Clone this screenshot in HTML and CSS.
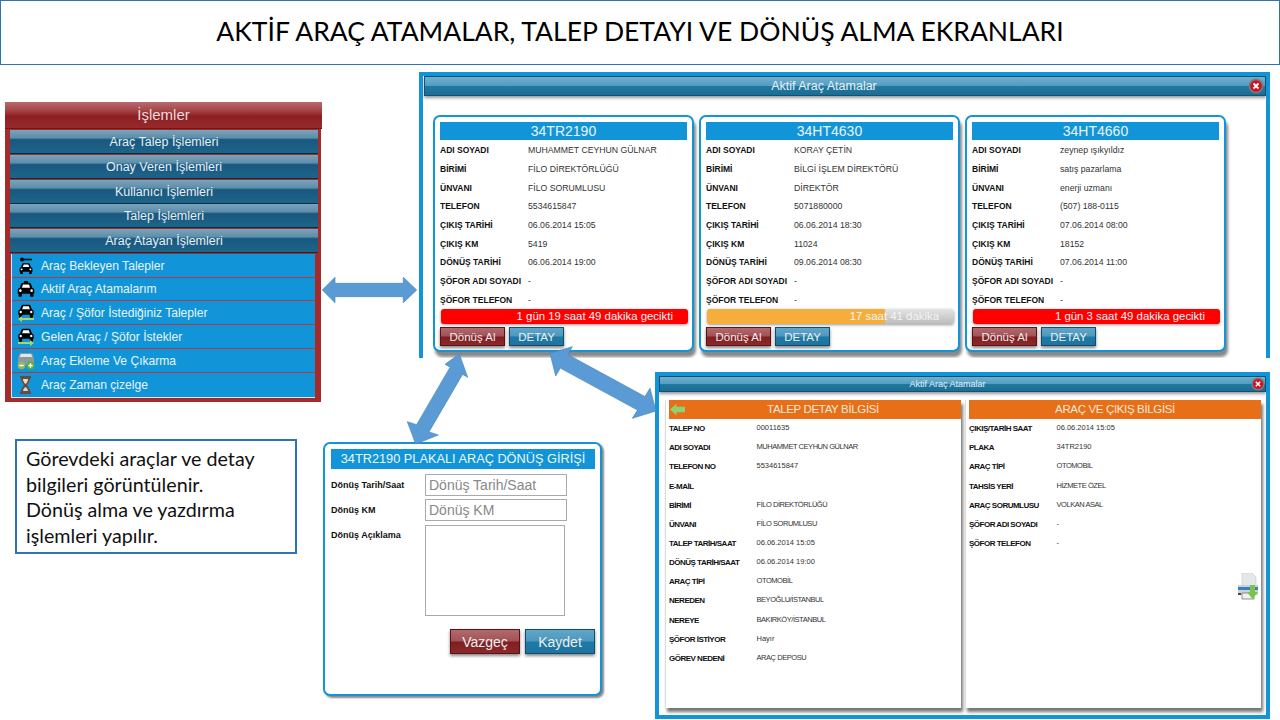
FILE: index.html
```html
<!DOCTYPE html>
<html lang="en">
<head>
    <meta charset="UTF-8">
    <title>Aktif Araç Atamalar</title>
    <link rel="stylesheet" href="styles.css">
</head>
<body>
    <svg class="icon-defs" width="0" height="0">
        <symbol id="car" viewBox="0 0 24 20">
            <path d="M7.5 1h9c1 0 1.700.5 2 1.400l2 5.600c1.500.4 2.500 1.400 2.500 3V15.500h-1v3a1 1 0 0 1-1 1h-2.500a1 1 0 0 1-1-1v-3H6.500v3a1 1 0 0 1-1 1H3a1 1 0 0 1-1-1v-3H1V11c0-1.600 1-2.600 2.500-3l2-5.600C5.800 1.500 6.500 1 7.500 1z" fill="#000"/>
            <path d="M8 3.200h8l1.500 4.300H6.500z" fill="#fff"/>
            <circle cx="4.500" cy="11.500" r="1.700" fill="#fff"/>
            <circle cx="19.500" cy="11.500" r="1.700" fill="#fff"/>
        </symbol>
        <symbol id="close" viewBox="0 0 16 16">
            <circle cx="8" cy="8" r="7.500" fill="#7a7a7a"/>
            <circle cx="8" cy="8" r="5.800" fill="#d3101f"/>
            <path d="M5.500 5.500l5 5M10.500 5.500l-5 5" stroke="#fff" stroke-width="1.800"/>
        </symbol>
    </svg>

    <header class="slide-title">AKTİF ARAÇ ATAMALAR, TALEP DETAYI VE DÖNÜŞ ALMA EKRANLARI</header>

    <!-- Sol menu -->
    <nav class="menu-panel">
        <div class="menu-head">İşlemler</div>
        <div class="menu-item">Araç Talep İşlemleri</div>
        <div class="menu-item">Onay Veren İşlemleri</div>
        <div class="menu-item">Kullanıcı İşlemleri</div>
        <div class="menu-item">Talep İşlemleri</div>
        <div class="menu-item">Araç Atayan İşlemleri</div>
        <ul class="sub-menu">
            <li>
                <svg class="sub-icon" viewBox="0 0 18 18">
                    <use href="#car" x="2" y="5" width="14" height="13"/>
                    <circle cx="5" cy="2.500" r="2" fill="#000"/>
                    <path d="M5 1.700h10v1.600H5z" fill="#000"/>
                </svg>
                Araç Bekleyen Talepler
            </li>
            <li>
                <svg class="sub-icon" viewBox="0 0 18 18">
                    <use href="#car" x="0" y="2" width="18" height="15"/>
                    <rect x="7" y="1" width="4" height="2" fill="#000"/>
                </svg>
                Aktif Araç Atamalarım
            </li>
            <li>
                <svg class="sub-icon" viewBox="0 0 18 18">
                    <use href="#car" x="0" y="0" width="18" height="14"/>
                    <path d="M1 15l4-3v2h12v2H5v2z" fill="#a5d86a"/>
                </svg>
                Araç / Şöfor İstediğiniz Talepler
            </li>
            <li>
                <svg class="sub-icon" viewBox="0 0 18 18">
                    <use href="#car" x="0" y="0" width="18" height="14"/>
                    <path d="M17 15l-4-3v2H1v2h12v2z" fill="#a5d86a"/>
                </svg>
                Gelen Araç / Şöfor İstekler
            </li>
            <li>
                <svg class="sub-icon" viewBox="0 0 18 18">
                    <path d="M3 1h12l2 5v7H1V6z" fill="#8b9a9c"/>
                    <path d="M4 2h10l1.500 3h-13z" fill="#e6e6e6"/>
                    <circle cx="4.500" cy="13.500" r="3.800" fill="#8fb766"/>
                    <path d="M2.300 12.800h4.400v1.400H2.300z" fill="#fff"/>
                    <circle cx="13.500" cy="13.500" r="4" fill="#55b03c"/>
                    <path d="M11.300 12.800h4.400v1.400h-4.400zM12.800 11.300h1.400v4.400h-1.400z" fill="#fff"/>
                </svg>
                Araç Ekleme Ve Çıkarma
            </li>
            <li>
                <svg class="sub-icon" viewBox="0 0 18 18">
                    <path d="M3 0h11v2.500h-1c0 3-2 5-3 6.500 1 1.500 3 3.500 3 6.500h1V18H3v-2.500h1c0-3 2-5 3-6.500-1-1.500-3-3.500-3-6.500H3z" fill="#6b4a3e"/>
                    <path d="M6 3h5c0 2.500-1.500 4-2.500 5C7.500 7 6 5.500 6 3z" fill="#e7ddc9"/>
                    <path d="M6 15c0-1.500 1.200-3 2.500-4 1.300 1 2.500 2.500 2.500 4z" fill="#c9d9e6"/>
                </svg>
                Araç Zaman çizelge
            </li>
        </ul>
    </nav>

    <!-- Aktif arac atamalar penceresi -->
    <section class="window main-window">
        <div class="window-bar">
            <span>Aktif Araç Atamalar</span>
            <svg class="close-btn"><use href="#close"/></svg>
        </div>
        <div class="card-row">
            <article class="car-card">
                <h3 class="card-plate">34TR2190</h3>
                <dl class="info-list">
                    <dt>ADI SOYADI</dt><dd>MUHAMMET CEYHUN GÜLNAR</dd>
                    <dt>BİRİMİ</dt><dd>FİLO DİREKTÖRLÜĞÜ</dd>
                    <dt>ÜNVANI</dt><dd>FİLO SORUMLUSU</dd>
                    <dt>TELEFON</dt><dd>5534615847</dd>
                    <dt>ÇIKIŞ TARİHİ</dt><dd>06.06.2014 15:05</dd>
                    <dt>ÇIKIŞ KM</dt><dd>5419</dd>
                    <dt>DÖNÜŞ TARİHİ</dt><dd>06.06.2014 19:00</dd>
                    <dt>ŞÖFOR ADI SOYADI</dt><dd>-</dd>
                    <dt>ŞÖFOR TELEFON</dt><dd>-</dd>
                </dl>
                <div class="time-bar late">1 gün 19 saat 49 dakika gecikti</div>
                <div class="card-actions">
                    <button class="btn btn-red btn-return">Dönüş Al</button>
                    <button class="btn btn-blue btn-detail">DETAY</button>
                </div>
            </article>
            <article class="car-card">
                <h3 class="card-plate">34HT4630</h3>
                <dl class="info-list">
                    <dt>ADI SOYADI</dt><dd>KORAY ÇETİN</dd>
                    <dt>BİRİMİ</dt><dd>BİLGİ İŞLEM DİREKTÖRÜ</dd>
                    <dt>ÜNVANI</dt><dd>DİREKTÖR</dd>
                    <dt>TELEFON</dt><dd>5071880000</dd>
                    <dt>ÇIKIŞ TARİHİ</dt><dd>06.06.2014 18:30</dd>
                    <dt>ÇIKIŞ KM</dt><dd>11024</dd>
                    <dt>DÖNÜŞ TARİHİ</dt><dd>09.06.2014 08:30</dd>
                    <dt>ŞÖFOR ADI SOYADI</dt><dd>-</dd>
                    <dt>ŞÖFOR TELEFON</dt><dd>-</dd>
                </dl>
                <div class="time-bar running">
                    <div class="time-fill" style="width: 72%"></div>
                    <span class="time-text">17 saat 41 dakika</span>
                </div>
                <div class="card-actions">
                    <button class="btn btn-red btn-return">Dönüş Al</button>
                    <button class="btn btn-blue btn-detail">DETAY</button>
                </div>
            </article>
            <article class="car-card">
                <h3 class="card-plate">34HT4660</h3>
                <dl class="info-list">
                    <dt>ADI SOYADI</dt><dd>zeynep ışıkyıldız</dd>
                    <dt>BİRİMİ</dt><dd>satış pazarlama</dd>
                    <dt>ÜNVANI</dt><dd>enerji uzmanı</dd>
                    <dt>TELEFON</dt><dd>(507) 188-0115</dd>
                    <dt>ÇIKIŞ TARİHİ</dt><dd>07.06.2014 08:00</dd>
                    <dt>ÇIKIŞ KM</dt><dd>18152</dd>
                    <dt>DÖNÜŞ TARİHİ</dt><dd>07.06.2014 11:00</dd>
                    <dt>ŞÖFOR ADI SOYADI</dt><dd>-</dd>
                    <dt>ŞÖFOR TELEFON</dt><dd>-</dd>
                </dl>
                <div class="time-bar late">1 gün 3 saat 49 dakika gecikti</div>
                <div class="card-actions">
                    <button class="btn btn-red btn-return">Dönüş Al</button>
                    <button class="btn btn-blue btn-detail">DETAY</button>
                </div>
            </article>
        </div>
    </section>

    <!-- Aciklama kutusu -->
    <aside class="note-box">
        Görevdeki araçlar ve detay bilgileri görüntülenir.<br>
        Dönüş alma ve yazdırma işlemleri yapılır.
    </aside>

    <!-- Donus girisi -->
    <section class="return-card">
        <h3 class="return-title">34TR2190 PLAKALI ARAÇ DÖNÜŞ GİRİŞİ</h3>
        <form class="return-form">
            <label>Dönüş Tarih/Saat</label>
            <input type="text" placeholder="Dönüş Tarih/Saat">
            <label>Dönüş KM</label>
            <input type="text" placeholder="Dönüş KM">
            <label>Dönüş Açıklama</label>
            <textarea></textarea>
        </form>
        <div class="return-actions">
            <button class="btn btn-red btn-form">Vazgeç</button>
            <button class="btn btn-blue btn-form">Kaydet</button>
        </div>
    </section>

    <!-- Talep detay penceresi -->
    <section class="window detail-window">
        <div class="window-bar small-bar">
            <span>Aktif Araç Atamalar</span>
            <svg class="close-btn small-close"><use href="#close"/></svg>
        </div>
        <div class="detail-columns">
            <div class="detail-panel">
                <h3 class="detail-head with-back">
                    <svg class="back-icon" viewBox="0 0 16 13">
                        <path d="M0 6.500L7 0v3.500h9v6H7V13z" fill="#8fd070"/>
                    </svg>
                    TALEP DETAY BİLGİSİ
                </h3>
                <dl class="detail-list">
                    <dt>TALEP NO</dt><dd>00011635</dd>
                    <dt>ADI SOYADI</dt><dd class="caps">MUHAMMET CEYHUN GÜLNAR</dd>
                    <dt>TELEFON NO</dt><dd>5534615847</dd>
                    <dt>E-MAİL</dt><dd></dd>
                    <dt>BİRİMİ</dt><dd class="caps">FİLO DİREKTÖRLÜĞÜ</dd>
                    <dt>ÜNVANI</dt><dd class="caps">FİLO SORUMLUSU</dd>
                    <dt>TALEP TARİH/SAAT</dt><dd>06.06.2014 15:05</dd>
                    <dt>DÖNÜŞ TARİH/SAAT</dt><dd>06.06.2014 19:00</dd>
                    <dt>ARAÇ TİPİ</dt><dd class="caps">OTOMOBİL</dd>
                    <dt>NEREDEN</dt><dd class="caps">BEYOĞLU/İSTANBUL</dd>
                    <dt>NEREYE</dt><dd class="caps">BAKIRKÖY/İSTANBUL</dd>
                    <dt>ŞÖFOR İSTİYOR</dt><dd>Hayır</dd>
                    <dt>GÖREV NEDENİ</dt><dd class="caps">ARAÇ DEPOSU</dd>
                </dl>
            </div>
            <div class="detail-panel">
                <h3 class="detail-head">ARAÇ VE ÇIKIŞ BİLGİSİ</h3>
                <dl class="detail-list">
                    <dt>ÇIKIŞ/TARİH SAAT</dt><dd>06.06.2014 15:05</dd>
                    <dt>PLAKA</dt><dd>34TR2190</dd>
                    <dt>ARAÇ TİPİ</dt><dd class="caps">OTOMOBİL</dd>
                    <dt>TAHSİS YERİ</dt><dd class="caps">HİZMETE ÖZEL</dd>
                    <dt>ARAÇ SORUMLUSU</dt><dd class="caps">VOLKAN ASAL</dd>
                    <dt>ŞÖFOR ADI SOYADI</dt><dd>-</dd>
                    <dt>ŞÖFOR TELEFON</dt><dd>-</dd>
                </dl>
                <svg class="print-icon" viewBox="0 0 22 27">
                    <path d="M5 0h10l4 4v10H5z" fill="#e4e8ea" stroke="#c2c8cc" stroke-width=".6"/>
                    <path d="M1 12h20v10H1z" fill="#c8d2d8"/>
                    <path d="M1 14h20v3H1z" fill="#3f7fb8"/>
                    <path d="M5 20h12v6H5z" fill="#eef0f2" stroke="#777" stroke-width=".8"/>
                    <path d="M1 20h3v2H1z" fill="#444"/>
                    <path d="M13 12h5v7h3l-5.500 7-5.500-7h3z" fill="#7dc24b"/>
                </svg>
            </div>
        </div>
    </section>

    <!-- Oklar -->
    <svg class="arrows" viewBox="0 0 1280 720">
        <polygon points="322.300,290 335,277.300 335,283.300 403.300,283.300 403.300,277.300 416.700,290 403.300,302.700 403.300,296.700 335,296.700 335,302.700"/>
        <polygon points="459.300,354 467.700,377.300 462.500,374.400 429,431.900 438.300,435 415.700,444 407.300,421.700 416.600,424.700 450.100,367.200 445,364.300"/>
        <polygon points="550,353.300 572.300,346.700 567.700,354.500 644.900,396.500 650,388.300 656,411 632.300,418.300 637.500,410.100 560.300,368.100 555.700,376"/>
    </svg>
</body>
</html>
```

FILE: styles.css
```css
body {
    margin: 0;
    width: 1280px;
    height: 720px;
    position: relative;
    overflow: hidden;
    background-color: #fff;
    font-family: "Liberation Sans", Arial, sans-serif;
}

h3, dl, dd, ul {
    margin: 0;
    padding: 0;
}

.icon-defs {
    position: absolute;
}

.slide-title {
    box-sizing: border-box;
    height: 65px;
    border: 1px solid #2e75b6;
    text-align: center;
    font-family: Lato, sans-serif;
    font-size: 26.500px;
    line-height: 61px;
    color: #000;
}

/* menu */
.menu-panel {
    position: absolute;
    left: 5px;
    top: 102px;
    width: 316px;
    height: 300px;
    background-color: #a52a2a;
}
.menu-head {
    height: 27px;
    margin-right: -1px;
    margin-bottom: 1px;
    background: linear-gradient(#b96a6d 0%, #a8484b 30%, #8c1f22 55%, #952a2c 100%);
    border-bottom: 1px solid #6e1618;
    box-sizing: border-box;
    text-align: center;
    color: #e9dcdc;
    font-size: 15px;
    line-height: 25px;
}
.menu-item {
    box-sizing: border-box;
    height: 24px;
    width: 308px;
    margin: 0 0 0.75px 5px;
    background: linear-gradient(#7ba3bb 0%, #5d8ea9 34%, #1a5880 42%, #1d6488 100%);
    border-bottom: 1px solid #08304a;
    text-align: center;
    color: #e6eff4;
    font-size: 12.500px;
    line-height: 25px;
}
.sub-menu {
    list-style: none;
    box-sizing: border-box;
    width: 304px;
    margin-left: 6px;
    background-color: #1295d8;
    border-bottom: 1px solid #d8e6ee;
    border-left: 1px solid #d8e6ee;
}
.sub-menu li {
    box-sizing: border-box;
    height: 23.800px;
    display: flex;
    align-items: center;
    gap: 6px;
    padding: 1px 0 0 5px;
    border-bottom: 1px solid #b03a44;
    color: #e8f4fb;
    font-size: 12.100px;
}
.sub-menu li:last-child {
    border-bottom: 0;
}
.sub-icon {
    width: 18px;
    height: 18px;
    flex-shrink: 0;
}

/* pencereler */
.window {
    position: absolute;
    box-sizing: border-box;
    background-color: #fff;
    border: 4px solid #1295d8;
    overflow: hidden;
}
.main-window {
    left: 419px;
    top: 72px;
    width: 851px;
    height: 286px;
    border-bottom: 0;
}
.detail-window {
    left: 655px;
    top: 372px;
    width: 615px;
    height: 347px;
}
.window-bar {
    box-sizing: border-box;
    height: 20px;
    margin-left: 1px;
    padding-right: 42px;
    position: relative;
    background: linear-gradient(#6fb0cf 0%, #539dc2 48%, #20799f 52%, #1b6d96 100%);
    border: 1px solid #14506f;
    box-shadow: 0 2px 3px #999;
    text-align: center;
    color: #e6f0f5;
    font-size: 12.500px;
    line-height: 18px;
}
.small-bar {
    height: 16px;
    margin-left: 0;
    padding-right: 30px;
    font-size: 9px;
    line-height: 14px;
}
.close-btn {
    position: absolute;
    right: 1px;
    top: 1px;
    width: 16px;
    height: 16px;
}
.small-close {
    right: 0;
    top: 0;
    width: 14px;
    height: 14px;
}

/* kartlar */
.card-row {
    display: flex;
    gap: 5px;
    padding: 19px 0 0 10px;
}
.car-card {
    box-sizing: border-box;
    width: 261px;
    height: 237px;
    padding: 5px;
    border: 2px solid #1295d8;
    border-radius: 7px;
    background-color: #fff;
    box-shadow: 2px 5px 3px #888;
}
.card-plate {
    height: 18px;
    background-color: #1295d8;
    text-align: center;
    color: #e8f4fb;
    font-size: 14px;
    font-weight: normal;
    line-height: 18px;
}
.info-list {
    display: grid;
    grid-template-columns: 88px 1fr;
    grid-auto-rows: 18.700px;
    align-items: center;
    margin-top: 1px;
    font-size: 8.700px;
    color: #333;
}
.info-list dt {
    font-size: 8.500px;
    font-weight: bold;
    color: #111;
}
.time-bar {
    box-sizing: border-box;
    position: relative;
    height: 15px;
    margin: 0 -1px 0 1px;
    padding-right: 15px;
    border-radius: 3px;
    box-shadow: 0 1px 3px #999;
    text-align: right;
    color: #f4f4f4;
    font-size: 11.400px;
    line-height: 15px;
}
.late {
    background-color: #fe0000;
}
.running {
    background: linear-gradient(#e4e4e4, #bcbcbc);
    overflow: hidden;
}
.time-fill {
    position: absolute;
    left: 0;
    top: 0;
    bottom: 0;
    background-color: #f5ae3c;
}
.time-text {
    position: relative;
}
.card-actions {
    display: flex;
    gap: 4px;
    margin-top: 3px;
}

/* butonlar */
.btn {
    box-sizing: border-box;
    padding: 0;
    border: 1px solid #000;
    color: #eee;
    font-family: "Liberation Sans", Arial, sans-serif;
    box-shadow: 0 2px 3px #888;
    cursor: pointer;
}
.btn-red {
    background: linear-gradient(#b06a6d 0%, #a35256 48%, #801d20 52%, #8a2a2c 100%);
    border-color: #5c1214;
}
.btn-blue {
    background: linear-gradient(#61a6c8 0%, #4d97bd 48%, #1c7aa8 52%, #21739e 100%);
    border-color: #124c6d;
}
.btn-return {
    width: 65px;
    height: 19px;
    font-size: 11.500px;
}
.btn-detail {
    width: 55px;
    height: 19px;
    font-size: 11.500px;
}
.btn-form {
    width: 70px;
    height: 25px;
    font-size: 14px;
}

/* aciklama */
.note-box {
    position: absolute;
    left: 15px;
    top: 439px;
    box-sizing: border-box;
    width: 282px;
    height: 115px;
    padding: 5px 30px 0 9px;
    border: 2px solid #2e75b6;
    font-family: Lato, sans-serif;
    font-size: 19.700px;
    line-height: 25.500px;
    color: #111;
}

/* donus girisi */
.return-card {
    position: absolute;
    left: 323px;
    top: 442px;
    box-sizing: border-box;
    width: 279px;
    height: 254px;
    padding: 5px 5px 0 6px;
    border: 2px solid #1295d8;
    border-radius: 7px;
    background-color: #fff;
    box-shadow: 2px 2px 2px #888;
}
.return-title {
    height: 20px;
    background-color: #1295d8;
    text-align: center;
    white-space: nowrap;
    color: #eef7fc;
    font-size: 12.750px;
    font-weight: normal;
    line-height: 20px;
}
.return-form {
    display: grid;
    grid-template-columns: 94px 142px;
    grid-template-rows: 22px 22px 91px;
    gap: 3px 0;
    margin-top: 5px;
}
.return-form label {
    font-size: 9px;
    font-weight: bold;
    color: #111;
    line-height: 22px;
}
.return-form input, .return-form textarea {
    box-sizing: border-box;
    margin: 0;
    padding: 0 3px;
    border: 1px solid #aaa;
    border-radius: 0;
    font-family: "Liberation Sans", Arial, sans-serif;
    font-size: 14px;
    resize: none;
}
.return-form textarea {
    width: 140px;
    margin-top: 1px;
    height: 91px;
}
.return-form input::placeholder {
    color: #888;
}
.return-actions {
    display: flex;
    justify-content: flex-end;
    gap: 5px;
    margin-top: 14px;
}

/* talep detay */
.detail-columns {
    display: flex;
    gap: 4px;
    padding: 8px 0 0 6px;
}
.detail-panel {
    box-sizing: border-box;
    position: relative;
    width: 296px;
    height: 308px;
    padding-left: 3px;
    background-color: #fff;
    border-left: 1px solid #ddd;
    box-shadow: 2px 4px 3px #777;
}
.detail-head {
    position: relative;
    height: 19px;
    background-color: #e66f17;
    text-align: center;
    color: #f8e8d8;
    font-size: 11.500px;
    font-weight: normal;
    letter-spacing: -0.350px;
    line-height: 19px;
}
.with-back {
    padding-left: 16px;
}
.back-icon {
    position: absolute;
    left: 1px;
    top: 3px;
    width: 15px;
    height: 13px;
}
.detail-list {
    display: grid;
    grid-template-columns: 87.500px 1fr;
    grid-auto-rows: 19.170px;
    align-items: center;
    font-size: 8px;
    color: #333;
}
.detail-list dt {
    font-weight: bold;
    color: #111;
    font-size: 8px;
    letter-spacing: -0.500px;
}
.detail-list dd {
    font-size: 7.500px;
    position: relative;
    top: -1px;
}
.detail-list .caps {
    letter-spacing: -0.450px;
}
.print-icon {
    position: absolute;
    right: 2px;
    top: 173px;
    width: 22px;
    height: 27px;
}

/* oklar */
.arrows {
    position: absolute;
    left: 0;
    top: 0;
    width: 1280px;
    height: 720px;
    pointer-events: none;
}
.arrows polygon {
    fill: #5b9bd5;
    stroke: #4a86bd;
    stroke-width: 0.7;
}
```
